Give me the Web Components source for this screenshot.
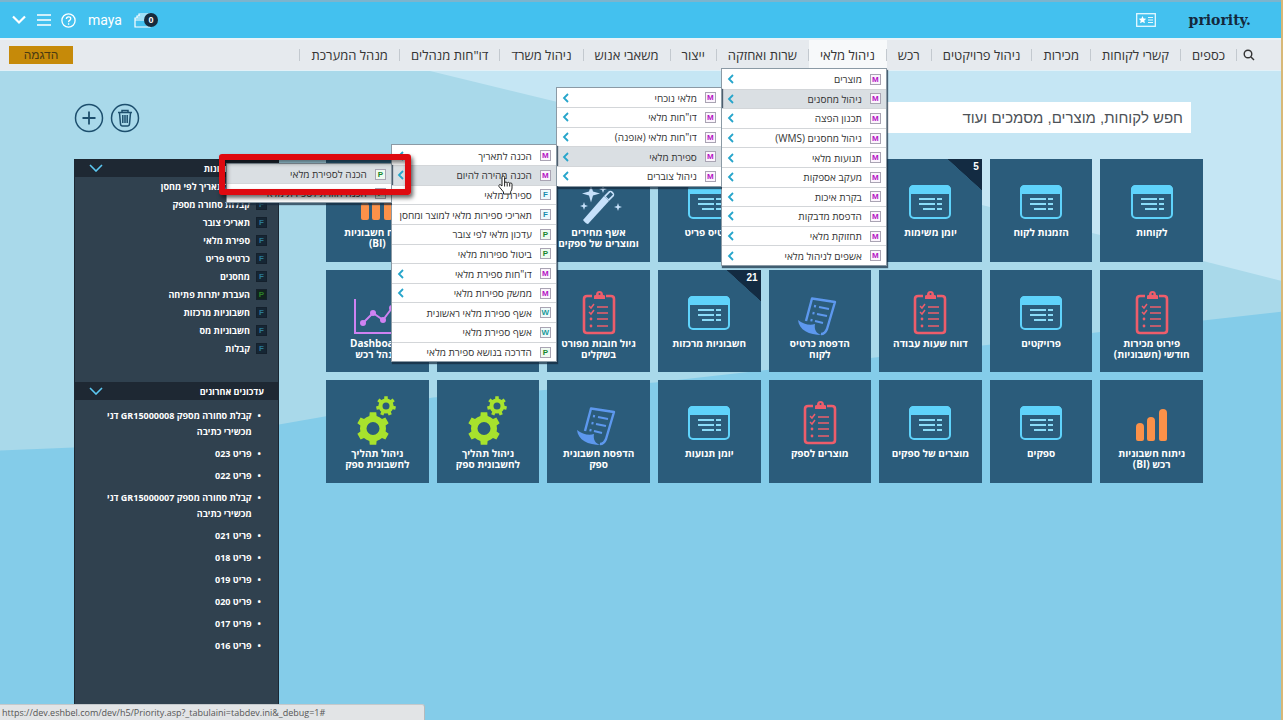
<!DOCTYPE html>
<html lang="he" dir="rtl">
<head>
<meta charset="utf-8">
<title>Priority</title>
<style>
    html, body { height: 100%; }
    body {
        margin: 0;
        overflow: hidden;
        font-family: "Open Sans", "Liberation Sans", Arial, sans-serif;
        color: #333;
    }
</style>
</head>
<body>

<app-page>
    <top-bar slot="top" user="maya" count="0"></top-bar>
    <main-nav slot="nav">
        <nav-tab>כספים</nav-tab>
        <nav-tab>קשרי לקוחות</nav-tab>
        <nav-tab>מכירות</nav-tab>
        <nav-tab>ניהול פרויקטים</nav-tab>
        <nav-tab>רכש</nav-tab>
        <nav-tab active>ניהול מלאי
            <menu-list slot="menu" id="stock-menu"></menu-list>
        </nav-tab>
        <nav-tab>שרות ואחזקה</nav-tab>
        <nav-tab>ייצור</nav-tab>
        <nav-tab>משאבי אנוש</nav-tab>
        <nav-tab>ניהול משרד</nav-tab>
        <nav-tab>דו"חות מנהלים</nav-tab>
        <nav-tab>מנהל המערכת</nav-tab>
    </main-nav>
    <search-row slot="search"></search-row>
    <tile-grid slot="tiles"></tile-grid>
    <side-panel slot="side"></side-panel>
    <status-bar slot="status">https://dev.eshbel.com/dev/h5/Priority.asp?_tabulaini=tabdev.ini&amp;_debug=1#</status-bar>
</app-page>

<script>
// small helper, every element here is a template cloned in an open root
function build(el, html) {
    var template = document.createElement('template');
    template.innerHTML = html;
    el.attachShadow({mode: 'open'});
    el.shadowRoot.appendChild(template.content.cloneNode(true));
}

function gear(cx, cy, outer, inner, hole, teeth) {
    var d = '';
    var step = Math.PI * 2 / teeth;
    for (var i = 0; i < teeth; i++) {
        var a = i * step - Math.PI / 2;
        var pts = [[inner, -0.27], [outer, -0.19], [outer, 0.19], [inner, 0.27], [inner, 0.5]];
        for (var j = 0; j < 5; j++) {
            var ang = a + pts[j][1] * step;
            d += (d == '' ? 'M' : 'L') + (cx + pts[j][0] * Math.cos(ang)).toFixed(2) + ' ' + (cy + pts[j][0] * Math.sin(ang)).toFixed(2);
        }
    }
    d += 'ZM' + (cx - hole) + ' ' + cy + 'a' + hole + ' ' + hole + ' 0 1 0 ' + hole * 2 + ' 0a' + hole + ' ' + hole + ' 0 1 0 ' + (-hole * 2) + ' 0Z';
    return '<path fill-rule="evenodd" stroke-linejoin="round" d="' + d + '"/>';
}

var icons = {
    card: `<g fill="none" stroke="#5fd3fb">
        <rect x="4" y="9" width="40" height="32" rx="4" stroke-width="2"/>
        <path d="M13 22h16M31 22h5M13 27h16M31 27h5M17 32h12M31 32h5" stroke-width="2" stroke="#8adcf8"/></g>
        <path d="M3 17v-4q0-5 5-5h32q5 0 5 5v4z" fill="#5fd3fb"/>`,
    clip: `<g fill="none" stroke="#ee5d6b" stroke-width="2">
        <path d="M17 8h-5q-3 0-3 3v31q0 3 3 3h24q3 0 3-3V11q0-3-3-3h-5" stroke-width="2.6"/>
        <path d="M22 19h11M22 25h11M22 31h11M22 38h11" stroke-width="1.5"/>
        <path d="M14 18l2 2 3-4M14 24l2 2 3-4" stroke-width="1.5"/></g>
        <path d="M19 11V8q0-1 2-1q0-4 3.500-4t3.500 4q2 0 2 1v3z" fill="#ee5d6b"/>
        <circle cx="24.500" cy="6" r="1" fill="#2b5c7b"/>
        <circle cx="16" cy="31" r="1.4" fill="#ee5d6b"/><circle cx="16" cy="38" r="1.4" fill="#ee5d6b"/>`,
    bars: `<g fill="#fb9149"><path d="M8 41V29q0-4 4-4t4 4v12q0 2-2 2h-4q-2 0-2-2z"/>
        <path d="M19 41V23q0-4 4-4t4 4v18q0 2-2 2h-4q-2 0-2-2z"/>
        <path d="M31 41V15q0-4 4-4t4 4v26q0 2-2 2h-4q-2 0-2-2z"/></g>`,
    scroll: `<g fill="none" stroke="#5d98ee" stroke-width="2.4" stroke-linejoin="round">
        <path d="M10 33L16 10.500L39 14L31 41Q29 46 25 46"/>
        <path d="M23 19l10 2M21 26l10 2M19 33l8 2" stroke-width="2"/>
        <path d="M18 18l2 .4M16.500 25l2 .4M14.500 32l2 .4"/></g>
        <path d="M2 32C7 36 14 38 19 36C18 41 20 46 26 47C13 47 3 42 2 32Z" fill="#5d98ee"/>`,
    gears: '<g fill="#a8e22d">' + gear(20, 30.5, 16.5, 13, 6.5, 6) + gear(33, 8, 10, 7.5, 3.5, 7) + '</g>',
    chart: `<g fill="none" stroke="#cf82f2" stroke-width="2">
        <path d="M2 11v34h42"/><path d="M10 35l10-10 10 7 9-12"/></g>
        <g fill="#cf82f2"><circle cx="10" cy="35" r="3"/><circle cx="20" cy="25" r="3"/>
        <circle cx="30" cy="32" r="3"/><circle cx="39" cy="20" r="3"/></g>`,
    wand: `<g fill="#c6e1fb"><path d="M8 43L29 19l5 5L13 47q-2 0-5-4z"/>
        <path d="M29 19l5-5q2-1 4 1t1 4l-5 5z"/></g>
        <path d="M31 19.500l4.500-4.500 2.500 2.500-4.500 4.500z" fill="#2b5c7b"/>
        <g fill="#c6e1fb"><path d="M16 8l2 6.500 7 2-7 2-2 7-2-7-7-2 7-2z"/>
        <path d="M28 8l1 3 3 1-3 1-1 3-1-3-3-1 3-1z"/>
        <path d="M9 25l1 3 3 1-3 1-1 3-1-3-3-1 3-1z"/>
        <path d="M43 26l1 3 3 1-3 1-1 3-1-3-3-1 3-1z"/></g>`
};

class AppPage extends HTMLElement {
    constructor() {
        super();
        build(this, `
        <style>
            :host {
                display: flex;
                flex-direction: column;
                box-sizing: border-box;
                position: relative;
                height: 100%;
                overflow: hidden;
                border-right: 2px solid #d8b877;
                background: #a9d9ea;
            }
            .content {
                flex: 1;
                display: flex;
                flex-direction: column;
                padding: 31px 78px 0 74px;
                min-height: 0;
                background: url('data:image/svg+xml,<svg xmlns="http://www.w3.org/2000/svg" viewBox="0 0 1281 650" preserveAspectRatio="none"><path fill="%23a9d9ea" d="M0 0h1281v650H0z"/><path fill="%23c5e6f4" d="M430 0L985 135L1281 210V0z"/><path fill="%2384cce9" d="M0 380L74 377L279 354L433 327L655 312L875 287L1096 262L1281 241V650H0z"/></svg>') 0 0 / 100% 100% no-repeat;
            }
            .columns {
                flex: 1;
                display: flex;
                gap: 47px;
                padding-top: 20px;
                min-height: 0;
            }
            slot[name="tiles"]::slotted(*) { flex: 1; min-width: 0; }
            slot[name="status"]::slotted(*) {
                position: absolute;
                left: 0;
                bottom: 0;
            }
            .highlight {
                position: absolute;
                left: 219px;
                top: 154px;
                width: 180px;
                height: 29px;
                border: 6px solid #de0a10;
                border-radius: 3px;
                box-shadow: 2px 3px 4px rgba(0, 0, 0, .6), inset 2px 3px 4px rgba(0, 0, 0, .5);
                z-index: 20;
                pointer-events: none;
            }
            .cursor {
                position: absolute;
                left: 497px;
                top: 175px;
                z-index: 21;
                pointer-events: none;
            }
        </style>
        <slot name="top"></slot>
        <slot name="nav"></slot>
        <div class="content">
            <slot name="search"></slot>
            <div class="columns">
                <slot name="tiles"></slot>
                <slot name="side"></slot>
            </div>
        </div>
        <slot name="status"></slot>
        <div class="highlight"></div>
        <svg class="cursor" width="18" height="20" viewBox="0 0 18 20" fill="#fff" stroke="#222" stroke-width="1">
            <path d="M5 11V2.500q0-1.500 1.300-1.500t1.300 1.500V8q.2-1 1.300-1t1.300 1.300q.3-1 1.300-1t1.200 1.400q.3-.8 1.200-.8t1.100 1.300V13q0 2-1.300 3.500V19H6.500v-2L2 11.500q-.5-1.500.5-1.800T5 11z"/>
            <path d="M7.600 8v3.500M10.200 8.500v3M12.700 9v2.500" fill="none"/>
        </svg>
        `);
    }
}

class TopBar extends HTMLElement {
    constructor() {
        super();
        build(this, `
        <style>
            :host {
                display: flex;
                align-items: center;
                justify-content: space-between;
                box-sizing: border-box;
                height: 38px;
                padding: 0 30px 0 11px;
                border-top: 2px solid #7cb4cd;
                background: #43c1ef;
                color: #fff;
            }
            div { display: flex; align-items: center; }
            .brand { gap: 33px; }
            .tools { direction: ltr; gap: 10px; }
            .logo {
                font: bold 14px "DejaVu Serif", serif;
                color: #14293d;
                text-decoration: none;
            }
            .user { font: 14px Roboto, sans-serif; margin: 0 2px; }
            button {
                display: flex;
                align-items: center;
                border: 0;
                padding: 0;
                background: none;
                color: #fff;
            }
            .count {
                width: 14px;
                height: 14px;
                margin-left: -7px;
                border-radius: 50%;
                background: #172b3d;
                font: bold 9px/14px "Liberation Sans", sans-serif;
            }
        </style>
        <div class="brand">
            <a class="logo" href="#" dir="ltr">priority.</a>
            <button aria-label="favorites"><svg width="20" height="14" viewBox="0 0 20 14" fill="none" stroke="#e6f8ff">
                <rect x=".7" y=".7" width="18.600" height="12.600" stroke-width="1.300"/>
                <path d="M6.500 3l1.100 2.600 2.700.2-2 1.800.6 2.700-2.400-1.400-2.400 1.400.6-2.700-2-1.800 2.700-.2z" fill="#fff" stroke="none"/>
                <path d="M12 4.500h5M12 7h5M12 9.500h5"/></svg></button>
        </div>
        <div class="tools">
            <button aria-label="more"><svg width="16" height="12" viewBox="0 0 16 12"><path d="M2 2.500l6 6 6-6" fill="none" stroke="#fff" stroke-width="2.200"/></svg></button>
            <button aria-label="menu"><svg width="14" height="14" viewBox="0 0 14 14"><path d="M0 2h14M0 7h14M0 12h14" stroke="#fff" stroke-width="1.300"/></svg></button>
            <button aria-label="help"><svg width="15" height="15" viewBox="0 0 15 15" fill="none" stroke="#fff" stroke-width="1.300">
                <circle cx="7.500" cy="7.500" r="6.600"/><path d="M5.400 6q0-2.200 2.200-2.200T9.700 5.800q0 1-1.100 1.600T7.600 9.200M7.600 10.300v1.400"/></svg></button>
            <span class="user"></span>
            <button aria-label="windows"><svg width="17" height="15" viewBox="0 0 17 15" fill="none" stroke="#fff" stroke-width="1.200">
                <path d="M1 5h15v9H1zM3 5V3h13M5 3V1h11M1 7h15"/></svg><span class="count"></span></button>
        </div>
        `);
    }

    connectedCallback() {
        this.shadowRoot.querySelector('.user').textContent = this.getAttribute('user');
        this.shadowRoot.querySelector('.count').textContent = this.getAttribute('count');
    }
}

class MainNav extends HTMLElement {
    constructor() {
        super();
        build(this, `
        <style>
            :host {
                display: flex;
                box-sizing: border-box;
                height: 33px;
                padding: 0 26px 0 9px;
                border-top: 2px solid #e9f3f8;
                border-bottom: 1px solid #e2f1f8;
                background: #e6eaee;
                position: relative;
                z-index: 10;
            }
            nav { display: flex; flex: 1; }
            .find { border: 0; background: none; padding: 0 0 0 6px; display: flex; align-items: center; }
            .demo {
                align-self: center;
                width: 64px;
                height: 18px;
                border: 0;
                padding: 0;
                background: #c68a09;
                color: #4a3a12;
                font: 12px "Liberation Sans", sans-serif;
            }
        </style>
        <button class="find" aria-label="find"><svg width="12" height="12" viewBox="0 0 12 12" fill="none" stroke="#333" stroke-width="1.400">
            <circle cx="5" cy="5" r="3.800"/><path d="M8 8l3 3"/></svg></button>
        <nav><slot></slot></nav>
        <button class="demo">הדגמה</button>
        `);
    }
}

class NavTab extends HTMLElement {
    constructor() {
        super();
        build(this, `
        <style>
            :host {
                display: flex;
                align-items: center;
                position: relative;
                font-size: 13px;
            }
            :host::before, :host(:last-child)::after {
                content: "";
                width: 1px;
                height: 12px;
                background: #c3c9cf;
            }
            a { color: #333; text-decoration: none; padding: 0 11px; white-space: nowrap; }
            :host([active]) { background: #f7f9fa; box-shadow: inset 0 -2px #3ea9d3; }
            slot[name="menu"]::slotted(*) {
                position: absolute;
                top: calc(100% - 2px);
                right: 0;
            }
        </style>
        <a href="#"><slot></slot></a>
        <slot name="menu"></slot>
        `);
    }
}

class TypeMark extends HTMLElement {
    static get observedAttributes() { return ['kind']; }
    constructor() {
        super();
        build(this, `
        <style>
            :host {
                display: block;
                flex: none;
                box-sizing: border-box;
                width: 11px;
                height: 11px;
                border: 1px solid #a9a4b3;
                background: #fbf4fc;
                color: #b512c4;
                font: bold 8px/9px "Liberation Sans", sans-serif;
                text-align: center;
            }
            :host([kind="F"]) { color: #1b8cab; background: #eefafd; }
            :host([kind="P"]) { color: #17862b; background: #effaf0; }
            :host([kind="W"]) { color: #1b9a9a; background: #eefafa; }
            :host([dark]) { border-color: #14202c; background: #152634; color: #2b7894; }
            :host([dark][kind="P"]) { background: #11241e; color: #2c8128; }
        </style>
        <span></span>
        `);
    }
    attributeChangedCallback(name, old, value) {
        this.shadowRoot.querySelector('span').textContent = value;
    }
}

class MenuItem extends HTMLElement {
    constructor() {
        super();
        build(this, `
        <style>
            :host {
                display: grid;
                grid-template-columns: minmax(0, 1fr);
                position: relative;
                border-top: 1px solid #d3d6d9;
                background: #fff;
            }
            :host(:first-child) { border-top-color: transparent; }
            :host([open]) { background: #dadfe3; }
            a {
                display: flex;
                align-items: center;
                gap: 8px;
                padding: 0 5px;
                color: #333;
                font-size: 10px;
                line-height: 12px;
                text-decoration: none;
                white-space: nowrap;
            }
            svg { margin-right: auto; display: none; }
            :host([more]) svg { display: block; }
            slot::slotted(menu-list) {
                position: absolute;
                top: -3px;
                right: 100%;
            }
        </style>
        <a href="#"><type-mark></type-mark><span></span>
            <svg width="8" height="10" viewBox="0 0 8 10"><path d="M6 1L2 5L6 9" fill="none" stroke="#26a5cb" stroke-width="1.800"/></svg></a>
        <slot></slot>
        `);
    }
    set data(item) {
        this.shadowRoot.querySelector('type-mark').setAttribute('kind', item[0]);
        this.shadowRoot.querySelector('span').textContent = item[1];
        if (item[2]) this.setAttribute('more', '');
        if (item[3]) {
            this.setAttribute('open', '');
            if (item[3] === true) return;
            var sub = document.createElement('menu-list');
            sub.items = item[3];
            this.appendChild(sub);
        }
    }
}

class MenuList extends HTMLElement {
    constructor() {
        super();
        build(this, `
        <style>
            :host {
                display: grid;
                grid-template-columns: minmax(0, 1fr);
                grid-auto-rows: 1fr;
                box-sizing: border-box;
                width: 166px;
                border: 1px solid #8b9aa5;
                background: #fff;
                box-shadow: 1px 2px 1px rgba(20, 40, 60, .7);
            }
        </style>
        <slot></slot>
        `);
    }
    set items(list) {
        // rows are a bit under 20px high
        this.style.height = Math.round(list.length * 19.7) + 1 + 'px';
        for (var i = 0; i < list.length; i++) {
            var item = document.createElement('menu-item');
            item.data = list[i];
            this.appendChild(item);
        }
    }
}

class SearchRow extends HTMLElement {
    constructor() {
        super();
        build(this, `
        <style>
            :host { display: flex; align-items: center; justify-content: space-between; padding-right: 12px; }
            input {
                box-sizing: border-box;
                width: 440px;
                height: 31px;
                border: 0;
                padding: 0 8px;
                background: #fff;
                font: 15px "Liberation Sans", sans-serif;
                direction: rtl;
            }
            input::placeholder { color: #4d5257; opacity: 1; }
            div { display: flex; gap: 6px; }
            button { border: 0; padding: 0; background: none; display: flex; }
            svg { fill: none; stroke: #1d4f6e; }
        </style>
        <input type="search" aria-label="חיפוש" placeholder="חפש לקוחות, מוצרים, מסמכים ועוד">
        <div>
            <button aria-label="delete"><svg width="30" height="30" viewBox="0 0 30 30" stroke-width="1.500">
                <circle cx="15" cy="15" r="13.500"/><path d="M8 9.500h14M12 9V7.500h6V9M9.500 10l1 11q.2 2 2 2h5q1.800 0 2-2l1-11M12.800 12v8M15 12v8M17.200 12v8"/></svg></button>
            <button aria-label="add"><svg width="30" height="30" viewBox="0 0 30 30" stroke-width="1.500">
                <circle cx="15" cy="15" r="13.500"/><path d="M15 8.500v13M8.500 15h13" stroke-width="1.800"/></svg></button>
        </div>
        `);
    }
}

class AppTile extends HTMLElement {
    constructor() {
        super();
        build(this, `
        <style>
            :host { display: block; position: relative; aspect-ratio: 1; background: #2b5c7b; }
            a {
                display: flex;
                flex-direction: column;
                align-items: center;
                padding-top: 18px;
                color: #fff;
                font-weight: bold;
                font-size: 10px;
                line-height: 11px;
                text-align: center;
                text-decoration: none;
            }
            svg { overflow: visible; }
            span { padding-top: 2px; white-space: pre-line; }
            b {
                position: absolute;
                top: 0;
                right: 0;
                width: 34px;
                height: 31px;
                padding: 2px 3px 0 0;
                box-sizing: border-box;
                background: linear-gradient(to bottom left, #132b42 50%, transparent 51%);
                color: #fff;
                font: bold 10px/12px "Liberation Sans", sans-serif;
            }
            b:empty { display: none; }
        </style>
        <a href="#"><svg width="48" height="48" viewBox="0 0 48 48"></svg><span></span></a>
        <b></b>
        `);
    }
    set data(tile) {
        this.shadowRoot.querySelector('svg').innerHTML = icons[tile[0]];
        this.shadowRoot.querySelector('span').textContent = tile[1];
        this.shadowRoot.querySelector('b').textContent = tile[2] || '';
    }
}

class TileGrid extends HTMLElement {
    constructor() {
        super();
        build(this, `
        <style>
            :host {
                display: grid;
                grid-template-columns: repeat(8, minmax(0, 1fr));
                gap: 8px;
                align-content: start;
                padding-top: 6px;
            }
        </style>
        `);
        var tiles = [
            ['card', 'לקוחות'], ['card', 'הזמנות לקוח'], ['card', 'יומן משימות', '5'], ['card', ''],
            ['card', 'כרטיס פריט'], ['wand', 'אשף מחירים\nומוצרים של ספקים'], ['card', ''], ['bars', 'ניתוח חשבוניות\n(BI)'],
            ['clip', 'פירוט מכירות\nחודשי (חשבוניות)'], ['card', 'פרויקטים'], ['clip', 'דווח שעות עבודה'], ['scroll', 'הדפסת כרטיס\nלקוח'],
            ['card', 'חשבוניות מרכזות', '21'], ['clip', 'גיול חובות מפורט\nבשקלים'], ['card', ''], ['chart', 'Dashboard\nמנהל רכש'],
            ['bars', 'ניתוח חשבוניות\nרכש (BI)'], ['card', 'ספקים'], ['card', 'מוצרים של ספקים'], ['clip', 'מוצרים לספק'],
            ['card', 'יומן תנועות'], ['scroll', 'הדפסת חשבונית\nספק'], ['gears', 'ניהול תהליך\nלחשבונית ספק'], ['gears', 'ניהול תהליך\nלחשבונית ספק']
        ];
        for (var i = 0; i < tiles.length; i++) {
            var tile = document.createElement('app-tile');
            tile.data = tiles[i];
            this.shadowRoot.appendChild(tile);
        }
    }
}

class SidePanel extends HTMLElement {
    constructor() {
        super();
        build(this, `
        <style>
            :host {
                display: block;
                flex: none;
                box-sizing: border-box;
                width: 205px;
                margin-top: 6px;
                border-left: 1px solid #1b2733;
                border-right: 1px solid #1b2733;
                background: #30414f;
                color: #fff;
                font-weight: bold;
                font-size: 9px;
            }
            h2 {
                display: flex;
                align-items: center;
                justify-content: space-between;
                height: 18px;
                margin: 0;
                padding: 0 14px;
                background: #1e2833;
                font-size: 9px;
            }
            ul { margin: 0; padding: 0; list-style: none; }
            a { color: #fff; text-decoration: none; }
            .recent { padding-bottom: 25px; }
            .recent li { display: flex; align-items: center; gap: 6px; height: 18px; padding-right: 11px; }
            .updates { padding-top: 8px; }
            .updates li { display: flex; line-height: 16px; padding: 0 17px 0 20px; margin-bottom: 6px; gap: 6px; }
            .updates li::before { content: "•"; }
        </style>
        <h2>כניסות אחרונות<svg width="14" height="8" viewBox="0 0 14 8"><path d="M1 1l6 6 6-6" fill="none" stroke="#5cc8f2" stroke-width="1.600"/></svg></h2>
        <ul class="recent"></ul>
        <h2>עדכונים אחרונים<svg width="14" height="8" viewBox="0 0 14 8"><path d="M1 1l6 6 6-6" fill="none" stroke="#5cc8f2" stroke-width="1.600"/></svg></h2>
        <ul class="updates"></ul>
        `);
        var recent = [['F', 'מלאי לתאריך לפי מחסן'], ['F', 'קבלות סחורה מספק'], ['F', 'תאריכי צובר'], ['F', 'ספירת מלאי'],
            ['F', 'כרטיס פריט'], ['F', 'מחסנים'], ['P', 'העברת יתרות פתיחה'], ['F', 'חשבוניות מרכזות'], ['F', 'חשבוניות מס'], ['F', 'קבלות']];
        var updates = ['קבלת סחורה מספק GR15000008 דני מכשירי כתיבה', 'פריט 023', 'פריט 022',
            'קבלת סחורה מספק GR15000007 דני מכשירי כתיבה', 'פריט 021', 'פריט 018', 'פריט 019', 'פריט 020', 'פריט 017', 'פריט 016'];
        this.shadowRoot.querySelector('.recent').innerHTML = recent.map(function (r) {
            return '<li><type-mark dark kind="' + r[0] + '"></type-mark><a href="#">' + r[1] + '</a></li>';
        }).join('');
        this.shadowRoot.querySelector('.updates').innerHTML = updates.map(function (u) {
            return '<li><a href="#">' + u + '</a></li>';
        }).join('');
    }
}

class StatusBar extends HTMLElement {
    constructor() {
        super();
        build(this, `
        <style>
            :host {
                display: block;
                box-sizing: border-box;
                width: 425px;
                height: 16px;
                padding: 0 2px;
                border-top: 1px solid #c5c9cc;
                border-right: 1px solid #b5babd;
                border-radius: 0 3px 0 0;
                background: #e2e4e6;
                color: #555;
                font-size: 9px;
                line-height: 15px;
                direction: ltr;
                white-space: nowrap;
            }
        </style>
        <slot></slot>
        `);
    }
}

window.customElements.define('type-mark', TypeMark);
window.customElements.define('menu-item', MenuItem);
window.customElements.define('menu-list', MenuList);
window.customElements.define('app-tile', AppTile);
window.customElements.define('tile-grid', TileGrid);
window.customElements.define('side-panel', SidePanel);
window.customElements.define('search-row', SearchRow);
window.customElements.define('nav-tab', NavTab);
window.customElements.define('main-nav', MainNav);
window.customElements.define('top-bar', TopBar);
window.customElements.define('status-bar', StatusBar);
window.customElements.define('app-page', AppPage);

// kind, text, has arrow, opened submenu (or true for a lit row)
var prepare = [['P', 'הכנה לספירת מלאי', false, true], ['P', 'הכנה חוזרת לספירת מלאי']];
var counting = [
    ['M', 'הכנה לתאריך', true],
    ['M', 'הכנה מהירה להיום', true, prepare],
    ['F', 'ספירת מלאי'],
    ['F', 'תאריכי ספירות מלאי למוצר ומחסן'],
    ['P', 'עדכון מלאי לפי צובר'],
    ['P', 'ביטול ספירות מלאי'],
    ['M', 'דו"חות ספירת מלאי', true],
    ['M', 'ממשק ספירות מלאי', true],
    ['W', 'אשף ספירת מלאי ראשונית'],
    ['W', 'אשף ספירת מלאי'],
    ['P', 'הדרכה בנושא ספירת מלאי']
];
var warehouses = [
    ['M', 'מלאי נוכחי', true],
    ['M', 'דו"חות מלאי', true],
    ['M', 'דו"חות מלאי (אופנה)', true],
    ['M', 'ספירת מלאי', true, counting],
    ['M', 'ניהול צוברים', true]
];
document.getElementById('stock-menu').items = [
    ['M', 'מוצרים', true],
    ['M', 'ניהול מחסנים', true, warehouses],
    ['M', 'תכנון הפצה', true],
    ['M', 'ניהול מחסנים (WMS)', true],
    ['M', 'תנועות מלאי', true],
    ['M', 'מעקב אספקות', true],
    ['M', 'בקרת איכות', true],
    ['M', 'הדפסת מדבקות', true],
    ['M', 'תחזוקת מלאי', true],
    ['M', 'אשפים לניהול מלאי', true]
];
</script>
</body>
</html>
